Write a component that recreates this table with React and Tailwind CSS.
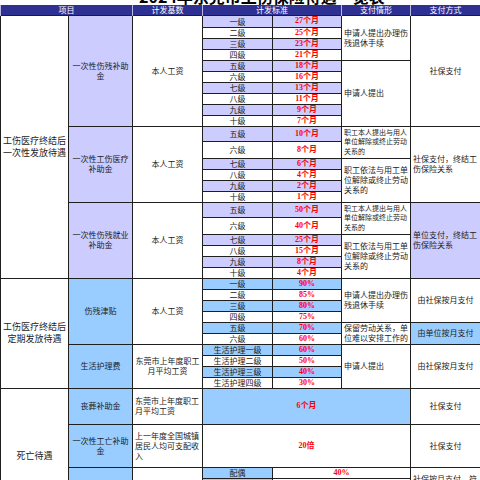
import React from "react";

const LAV = "bg-[#ccccff]";
const BLU = "bg-[#99ccff]";
const BD = "border border-[#1f1f1f]";
const RED = "text-[#ff0000] font-bold text-[8px] leading-[10px] font-[Liberation_Serif,Noto_Sans_CJK_SC,serif]";

function G({ children, bg, cls = "" }) {
  return <td className={`${BD} ${bg || ""} text-center text-[8px] leading-[9px] p-0 ${cls}`}>{children}</td>;
}
function V({ children, bg, colSpan }) {
  return (
    <td colSpan={colSpan} className={`${BD} ${bg || ""} text-center p-0 ${RED}`}>
      {children}
    </td>
  );
}
function Sub({ children, rowSpan, bg }) {
  return (
    <td rowSpan={rowSpan} className={`${BD} ${bg} text-center text-[8px] leading-[10px] px-[3px]`}>
      {children}
    </td>
  );
}
function Base({ children, rowSpan, left }) {
  return (
    <td rowSpan={rowSpan} className={`${BD} bg-white text-[8px] leading-[10px] ${left ? "text-left px-[2px]" : "text-center px-[2px]"}`}>
      {children}
    </td>
  );
}
function Cond({ children, rowSpan, small, center }) {
  return (
    <td
      rowSpan={rowSpan}
      className={`${BD} bg-white ${center ? "text-center" : "text-left"} pl-[2px] pr-[1px] ${small ? "text-[7px] leading-[9.5px]" : "text-[8px] leading-[10px]"}`}
    >
      {children}
    </td>
  );
}
function Pay({ children, rowSpan, bg, left }) {
  return (
    <td rowSpan={rowSpan} className={`${BD} ${bg || "bg-white"} ${left ? "text-left pl-[2px]" : "text-center"} text-[8px] leading-[10px]`}>
      {children}
    </td>
  );
}
function Cat({ children, rowSpan, cls = "" }) {
  return (
    <td rowSpan={rowSpan} className={`${BD} bg-white text-center text-[9px] leading-[12px] px-[1px] ${cls}`}>
      {children}
    </td>
  );
}

const s1 = [
  ["一级", "27个月", "h-[12px]"],
  ["二级", "25个月", "h-[11px]"],
  ["三级", "23个月", "h-[11px]"],
  ["四级", "21个月", "h-[11px]"],
  ["五级", "18个月", "h-[10px]"],
  ["六级", "16个月", "h-[11px]"],
  ["七级", "13个月", "h-[11px]"],
  ["八级", "11个月", "h-[10px]"],
  ["九级", "9个月", "h-[11px]"],
  ["十级", "7个月", "h-[11px]"],
];
const s2 = [
  ["五级", "10个月", "h-[15px]"],
  ["六级", "8个月", "h-[17px]"],
  ["七级", "6个月", "h-[11px]"],
  ["八级", "4个月", "h-[11px]"],
  ["九级", "2个月", "h-[11px]"],
  ["十级", "1个月", "h-[11px]"],
];
const s3 = [
  ["五级", "50个月", "h-[15px]"],
  ["六级", "40个月", "h-[17px]"],
  ["七级", "25个月", "h-[11px]"],
  ["八级", "15个月", "h-[11px]"],
  ["九级", "8个月", "h-[11px]"],
  ["十级", "4个月", "h-[11px]"],
];
const s4 = [
  ["一级", "90%", "h-[10px]"],
  ["二级", "85%", "h-[11px]"],
  ["三级", "80%", "h-[11px]"],
  ["四级", "75%", "h-[10px]"],
  ["五级", "70%", "h-[11px]"],
  ["六级", "60%", "h-[11px]"],
];
const s5 = [
  ["生活护理一级", "60%", "h-[11px]"],
  ["生活护理二级", "50%", "h-[10px]"],
  ["生活护理三级", "40%", "h-[11px]"],
  ["生活护理四级", "30%", "h-[10px]"],
];
const s6 = [
  ["配偶", "40%"],
  ["其他亲属", "30%"],
  ["孤寡老人", "加发10%"],
  ["孤儿", "加发10%"],
  ["合计", "不超过本人工资"],
];

export default function App() {
  return (
    <div className="w-[480px] h-[480px] overflow-hidden bg-white text-[#222] font-[Noto_Sans_CJK_SC,Noto_Sans,sans-serif]">
      <div className="h-[5px] overflow-hidden">
        <div className="-mt-[12px] pl-[44px] text-center text-[16px] leading-[16px] font-bold text-black whitespace-nowrap">
          2024年东莞市工伤保险待遇一览表
        </div>
      </div>
      <table className="w-[480px] table-fixed border-collapse">
        <colgroup>
          <col className="w-[68px]" />
          <col className="w-[64px]" />
          <col className="w-[70px]" />
          <col className="w-[70px]" />
          <col className="w-[69px]" />
          <col className="w-[69px]" />
          <col className="w-[70px]" />
        </colgroup>
        <tbody>
          <tr className="h-[10px] bg-[#2e3192] text-white text-[8px] leading-[9px]">
            <td colSpan={2} className="border-x border-[#b8b8e0] text-center p-0">项目</td>
            <td className="border-x border-[#b8b8e0] text-center p-0">计发基数</td>
            <td colSpan={2} className="border-x border-[#b8b8e0] text-center p-0">计发标准</td>
            <td className="border-x border-[#b8b8e0] text-center p-0">支付情形</td>
            <td className="border-x border-[#b8b8e0] text-center p-0">支付方式</td>
          </tr>

          {s1.map(([g, v, h], i) => {
            const bg = i % 2 === 0 ? LAV : "bg-white";
            return (
              <tr key={"a" + i} className={h}>
                {i === 0 && <Cat rowSpan={22}>工伤医疗终结后一次性发放待遇</Cat>}
                {i === 0 && <Sub rowSpan={10} bg={LAV}>一次性伤残补助金</Sub>}
                {i === 0 && <Base rowSpan={10}>本人工资</Base>}
                <G bg={bg}>{g}</G>
                <V bg={bg}>{v}</V>
                {i === 0 && <Cond rowSpan={4}>申请人提出办理伤残退休手续</Cond>}
                {i === 4 && <Cond rowSpan={6}>申请人提出</Cond>}
                {i === 0 && <Pay rowSpan={10}>社保支付</Pay>}
              </tr>
            );
          })}

          {s2.map(([g, v, h], i) => {
            const bg = i % 2 === 0 ? LAV : "bg-white";
            return (
              <tr key={"b" + i} className={h}>
                {i === 0 && <Sub rowSpan={6} bg={LAV}>一次性工伤医疗补助金</Sub>}
                {i === 0 && <Base rowSpan={6}>本人工资</Base>}
                <G bg={bg}>{g}</G>
                <V bg={bg}>{v}</V>
                {i === 0 && <Cond rowSpan={2} small>职工本人提出与用人单位解除或终止劳动关系的</Cond>}
                {i === 2 && <Cond rowSpan={4}>职工依法与用工单位解除或终止劳动关系的</Cond>}
                {i === 0 && <Pay rowSpan={6} left>社保支付，终结工伤保险关系</Pay>}
              </tr>
            );
          })}

          {s3.map(([g, v, h], i) => {
            const bg = i % 2 === 0 ? LAV : "bg-white";
            return (
              <tr key={"c" + i} className={h}>
                {i === 0 && <Sub rowSpan={6} bg={LAV}>一次性伤残就业补助金</Sub>}
                {i === 0 && <Base rowSpan={6}>本人工资</Base>}
                <G bg={bg}>{g}</G>
                <V bg={bg}>{v}</V>
                {i === 0 && <Cond rowSpan={2} small>职工本人提出与用人单位解除或终止劳动关系的</Cond>}
                {i === 2 && <Cond rowSpan={4}>职工依法与用工单位解除或终止劳动关系的</Cond>}
                {i === 0 && <Pay rowSpan={6} bg={LAV} left>单位支付，终结工伤保险关系</Pay>}
              </tr>
            );
          })}

          {s4.map(([g, v, h], i) => {
            const bg = i % 2 === 0 ? BLU : "bg-white";
            return (
              <tr key={"d" + i} className={h}>
                {i === 0 && <Cat rowSpan={10}>工伤医疗终结后定期发放待遇</Cat>}
                {i === 0 && <Sub rowSpan={6} bg={BLU}>伤残津贴</Sub>}
                {i === 0 && <Base rowSpan={6}>本人工资</Base>}
                <G bg={bg}>{g}</G>
                <V bg={bg}>{v}</V>
                {i === 0 && <Cond rowSpan={4}>申请人提出办理伤残退休手续</Cond>}
                {i === 4 && <Cond rowSpan={2}>保留劳动关系，单位难以安排工作的</Cond>}
                {i === 0 && <Pay rowSpan={4}>由社保按月支付</Pay>}
                {i === 4 && <Pay rowSpan={2} bg={BLU}>由单位按月支付</Pay>}
              </tr>
            );
          })}

          {s5.map(([g, v, h], i) => {
            const bg = i % 2 === 0 ? BLU : "bg-white";
            return (
              <tr key={"e" + i} className={h}>
                {i === 0 && <Sub rowSpan={4} bg={BLU}>生活护理费</Sub>}
                {i === 0 && <Base rowSpan={4}>东莞市上年度职工月平均工资</Base>}
                <G bg={bg}>{g}</G>
                <V bg={bg}>{v}</V>
                {i === 0 && <Cond rowSpan={4}>申请人提出</Cond>}
                {i === 0 && <Pay rowSpan={4}>由社保按月支付</Pay>}
              </tr>
            );
          })}

          <tr className="h-[36px]">
            <Cat rowSpan={7} cls="align-top pt-[61px]">死亡待遇</Cat>
            <Sub bg={BLU}>丧葬补助金</Sub>
            <Base left>东莞市上年度职工月平均工资</Base>
            <V bg={BLU} colSpan={3}>6个月</V>
            <Pay>社保支付</Pay>
          </tr>
          <tr className="h-[43px]">
            <Sub bg={BLU}>一次性工亡补助金</Sub>
            <Base left>上一年度全国城镇居民人均可支配收入</Base>
            <V bg="bg-white" colSpan={3}>20倍</V>
            <Pay>社保支付</Pay>
          </tr>
          {s6.map(([g, v], i) => (
            <tr key={"f" + i} className="h-[11px]">
              {i === 0 && <Sub rowSpan={5} bg={BLU}>供养亲属抚恤金</Sub>}
              {i === 0 && <Base rowSpan={5}>本人工资</Base>}
              <G bg={BLU}>{g}</G>
              <V bg="bg-white" colSpan={2}>{v}</V>
              {i === 0 && <Pay rowSpan={4} left>社保按月支付，符合条件的供养亲属按月领取</Pay>}
              {i === 4 && <Pay>由社保支付</Pay>}
            </tr>
          ))}
        </tbody>
      </table>
    </div>
  );
}
